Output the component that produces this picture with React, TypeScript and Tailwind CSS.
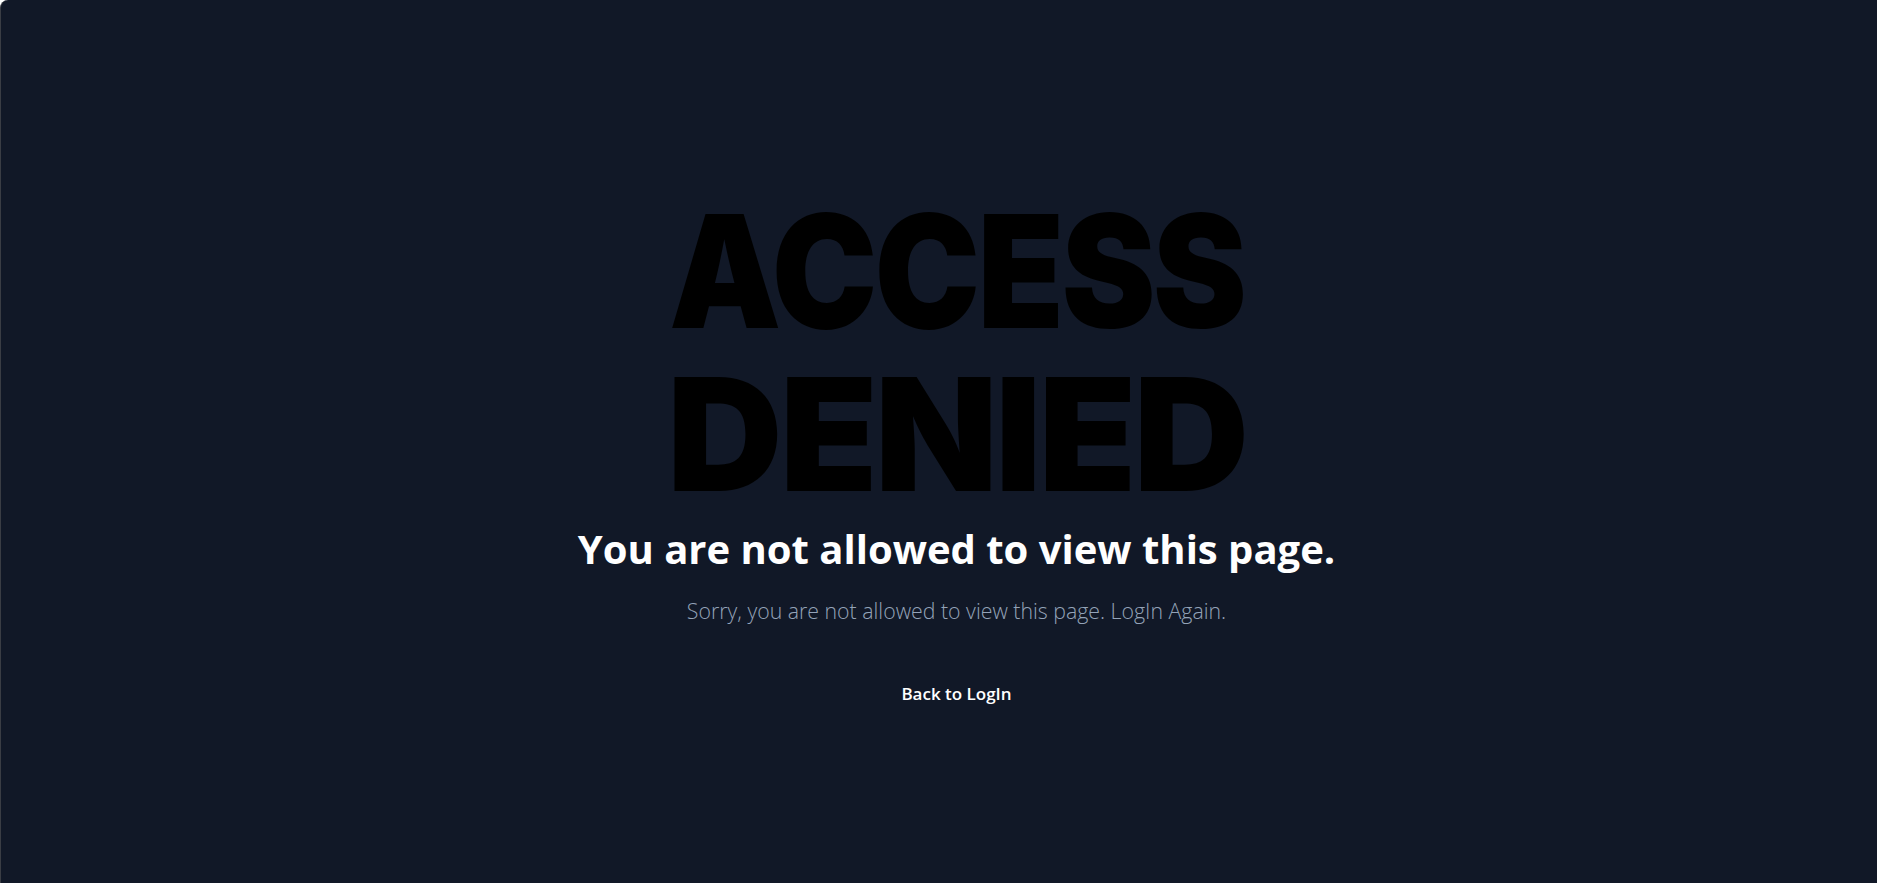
export default function App() {
  return (
    <div className="min-h-screen w-full bg-[#111827] border-l border-[#3a3d44] rounded-tl-lg flex flex-col items-center justify-center pl-[35px]">
      <div className="flex flex-col items-center mt-[12px]">
        <h1
          className="text-black font-black text-[157px] leading-[163px] text-center tracking-[-3px]"
          style={{ fontFamily: 'Inter, "Liberation Sans", sans-serif' }}
        >
          <span className="block scale-x-[0.9]">ACCESS</span>
          <span className="block scale-x-[1.02]">DENIED</span>
        </h1>
        <h2
          className="text-white font-bold text-[40px] leading-[48px] mt-[9px]"
          style={{ fontFamily: '"Open Sans", "Noto Sans", sans-serif' }}
        >
          You are not allowed to view this page.
        </h2>
        <p
          className="text-[#94a3b8] font-light text-[21.3px] leading-[28px] mt-[24px]"
          style={{ fontFamily: '"Open Sans", "Noto Sans", sans-serif' }}
        >
          Sorry, you are not allowed to view this page. LogIn Again.
        </p>
        <a
          href="#"
          className="text-white font-semibold text-[17px] leading-[24px] mt-[57px]"
          style={{ fontFamily: '"Open Sans", "Noto Sans", sans-serif' }}
        >
          Back to LogIn
        </a>
      </div>
    </div>
  );
}
